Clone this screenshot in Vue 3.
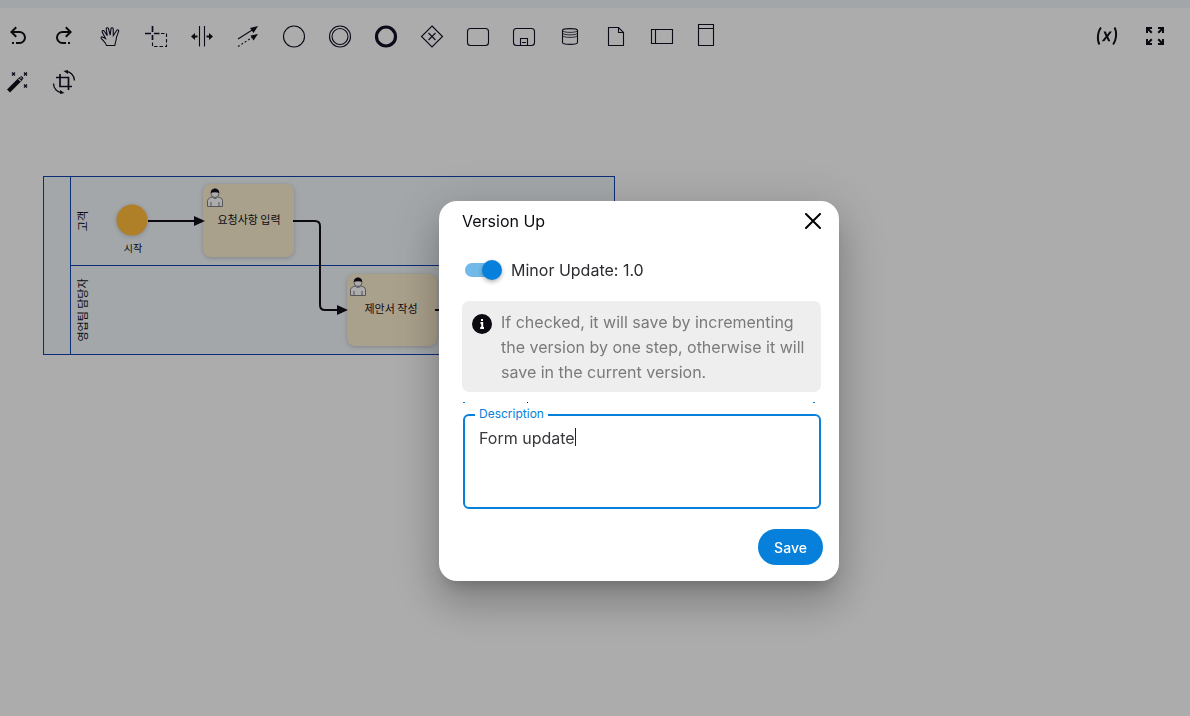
<script setup>
import { ref } from 'vue'

const minorUpdate = ref(true)
const description = ref('Form update')
</script>

<template>
  <div class="page">
    <div class="strip"></div>
    <header class="toolbar">
      <div class="tools">
        <div class="tool-row">
          <button class="tool" aria-label="Undo"><svg viewBox="0 0 24 24"><path class="solid" d="M13.5,7A6.5,6.5 0 0,1 20,13.5A6.5,6.5 0 0,1 13.5,20H10V18H13.5C16,18 18,16 18,13.5C18,11 16,9 13.5,9H7.83L10.91,12.09L9.5,13.5L4,8L9.5,2.5L10.92,3.91L7.83,7H13.5M6,18H8V20H6V18Z" /></svg></button>
          <button class="tool" aria-label="Redo"><svg viewBox="0 0 24 24"><path class="solid" d="M10.5,7A6.5,6.5 0 0,0 4,13.5A6.5,6.5 0 0,0 10.5,20H14V18H10.5C8,18 6,16 6,13.5C6,11 8,9 10.5,9H16.17L13.09,12.09L14.5,13.5L20,8L14.5,2.5L13.08,3.91L16.17,7H10.5M18,18H16V20H18V18Z" /></svg></button>
          <button class="tool" aria-label="Hand tool"><svg viewBox="0 0 24 24"><path d="M8.5 21.5C8 19 6 17.5 3.2 14.3C2.6 13.3 3.8 12.3 5 13.2L7.5 14.5L4.2 8C3.8 6.7 5.5 5.9 6.3 7.2L9.3 11.6L8.2 5C8.1 3.5 10.1 3.2 10.5 4.7L12.2 11L13 4.7C13.3 3.2 15.3 3.5 15.2 5L15.3 11.5L18.8 6.3C19.6 5.2 21.2 6.1 20.6 7.4L18.6 12.8C18.2 17 17.3 18 16.8 21.5Z" /></svg></button>
          <button class="tool" aria-label="Lasso tool"><svg viewBox="0 0 24 24"><path class="bold" d="M1 9.5H7M10 9.5H15.5M8.5 2V8M8.5 11V16" /><path class="lasso" d="M17 9.5H22.5V22.5H8.5V17" /></svg></button>
          <button class="tool" aria-label="Space tool"><svg viewBox="0 0 24 24"><path d="M9.5 2V22.5M14.5 2V22.5" /><path class="solid" d="M1 12.5L5 9V11.5H7.5V13.5H5V16ZM23 12.5L19 9V11.5H16.5V13.5H19V16Z" /></svg></button>
          <button class="tool" aria-label="Connect tool"><svg viewBox="0 0 24 24"><path d="M2 15L17 5.5" /><path class="dots" d="M2 22.5L17 13" /><path class="solid" d="M22 2L17.5 9L14 4ZM22 10L17.5 16.5L14.5 11.5Z" /></svg></button>
          <button class="tool" aria-label="Start event"><svg viewBox="0 0 24 24"><circle cx="12" cy="12.5" r="10.5" /></svg></button>
          <button class="tool" aria-label="Intermediate event"><svg viewBox="0 0 24 24"><circle cx="12" cy="12.5" r="10.5" /><circle cx="12" cy="12.5" r="8" /></svg></button>
          <button class="tool" aria-label="End event"><svg viewBox="0 0 24 24"><circle class="heavy" cx="12" cy="12.5" r="9.5" /></svg></button>
          <button class="tool" aria-label="Gateway"><svg viewBox="0 0 24 24"><path d="M12 2L22.5 12.5L12 23L1.5 12.5ZM8.5 9L15.5 16M15.5 9L8.5 16" /></svg></button>
          <button class="tool" aria-label="Task"><svg viewBox="0 0 24 24"><rect x="1.5" y="4.5" width="21" height="17" rx="3" /></svg></button>
          <button class="tool" aria-label="Subprocess"><svg viewBox="0 0 24 24"><rect x="1.5" y="4.5" width="21" height="17" rx="3" /><path d="M8.5 21.5V14.5H15.5V21.5M10 18.5H14" /></svg></button>
          <button class="tool" aria-label="Data store"><svg viewBox="0 0 24 24"><path d="M4.5 6.5C4.5 4 19.5 4 19.5 6.5V18.5C19.5 21 4.5 21 4.5 18.5Z" /><path class="fine" d="M4.5 6.5C4.5 9 19.5 9 19.5 6.5M4.5 9C4.5 11.5 19.5 11.5 19.5 9M4.5 11.5C4.5 14 19.5 14 19.5 11.5" /></svg></button>
          <button class="tool" aria-label="Data object"><svg viewBox="0 0 24 24"><path d="M4.5 3.5H14.5L19.5 8.5V21.5H4.5ZM14.5 3.5V8.5H19.5" /></svg></button>
          <button class="tool" aria-label="Horizontal pool"><svg viewBox="0 0 24 24"><path d="M1.5 5.5H22.5V19.5H1.5ZM5.5 5.5V19.5" /></svg></button>
          <button class="tool" aria-label="Vertical pool"><svg viewBox="0 0 24 24"><path d="M2.5 0.5H17.5V21.5H2.5ZM2.5 4.5H17.5" /></svg></button>
        </div>
        <div class="tool-row">
          <button class="tool" aria-label="Auto layout"><svg viewBox="0 0 24 24"><path class="solid" d="M1 19.5L12.5 8L15.5 6L17.5 8L15.5 11L4 22.5Z" /><path class="gap" d="M12.5 8.8L14.7 11M14.5 8.5L15.5 7.5" /><path class="spark" d="M6 2.5L9 5.5M9 2.5L6 5.5M18 2.5L21 5.5M21 2.5L18 5.5M18 14.5L21 17.5M21 14.5L18 17.5" /></svg></button>
          <button class="tool" aria-label="Change orientation"><svg viewBox="0 0 24 24"><path class="line" d="M8 4V16.5H20M4 7.5H16.5V20" /><path class="spark" d="M14 1.5C18.5 1.5 22 5 22.5 10.5M10 22.5C5.5 22.5 1.5 19 1.5 13.5" /><path class="solid" d="M11.5 1L16 0V4ZM12.5 23L8 20V24Z" /></svg></button>
        </div>
      </div>
      <div class="actions">
        <button class="tool" aria-label="Variables"><svg viewBox="0 0 24 24"><path class="solid" d="M20.41,3C21.8,5.71 22.35,8.84 22,12C21.8,15.16 20.7,18.29 18.83,21L17.3,20C18.91,17.57 19.85,14.8 20,12C20.34,9.2 19.89,6.43 18.7,4L20.41,3M5.17,3L6.7,4C5.09,6.43 4.15,9.2 4,12C3.66,14.8 4.12,17.57 5.3,20L3.61,21C2.21,18.29 1.65,15.17 2,12C2.2,8.84 3.3,5.71 5.17,3M12.08,10.68L14.4,7.45H16.93L13.15,12.45L15.35,17.37H13.09L11.71,14L9.28,17.33H6.76L10.66,12.21L8.53,7.45H10.8L12.08,10.68Z" /></svg></button>
        <button class="tool" aria-label="Full screen"><svg viewBox="0 0 24 24"><path class="solid" d="M3 3H9V5H6.5L9.5 8L8 9.5L5 6.5V9H3ZM21 3H15V5H17.5L14.5 8L16 9.5L19 6.5V9H21ZM3 21H9V19H6.5L9.5 16L8 14.5L5 17.5V15H3ZM21 21H15V19H17.5L14.5 16L16 14.5L19 17.5V15H21Z" /></svg></button>
      </div>
    </header>

    <main class="canvas">
      <svg class="diagram" viewBox="43 176 573 180" width="573" height="180" role="img" aria-label="Process diagram">
        <rect class="pool" x="43.5" y="176.5" width="571" height="178" />
        <path class="pool-line" d="M70.5 176.5V354.5M70.5 265.5H614.5" />
        <text class="label" transform="translate(87 221) rotate(-90)">고객</text>
        <text class="label" transform="translate(87 310) rotate(-90)">영업팀 담당자</text>
        <circle class="start" cx="132" cy="220" r="15.5" />
        <text class="label small" x="133" y="252">시작</text>
        <rect class="task" x="203" y="184" width="91" height="73" rx="8" />
        <rect class="task" x="347" y="274" width="90" height="72" rx="8" />
        <path class="flow" d="M148 221H196M293 221H315Q320 221 320 226V305Q320 310 325 310H339M435 310H450" />
        <path class="arrow" d="M205 221L194 216V226ZM348 310L337 305V315Z" />
        <g v-for="p in [[207, 188], [350, 277]]" :key="p[0]" :transform="`translate(${p[0]} ${p[1]})`">
          <path class="person" d="M0.5 18.5V12.5C1 10.5 3 9.5 5.5 9C7 11 9 11 10.5 9C13 9.5 15.5 10.5 15.5 12.5V18.5ZM4 18.5V14M12 18.5V14" />
          <circle class="person" cx="8" cy="5.5" r="4" />
          <path class="arrow" d="M3.8 5C3.5 -1 12.5 -1 12.2 5C10 4 6 4 3.8 5Z" />
        </g>
        <text class="label" x="249" y="224">요청사항 입력</text>
        <text class="label" x="391" y="313">제안서 작성</text>
      </svg>
    </main>

    <div class="overlay">
      <section class="dialog" role="dialog" aria-labelledby="dialog-title">
        <div class="dialog-head">
          <h2 id="dialog-title">Version Up</h2>
          <button class="close" aria-label="Close"><svg viewBox="0 0 16 16"><path d="M1 1L15 15M15 1L1 15" /></svg></button>
        </div>
        <label class="switch">
          <input v-model="minorUpdate" type="checkbox" role="switch" />
          <span>Minor Update: 1.0</span>
        </label>
        <div class="info">
          <svg viewBox="0 0 20 20"><circle cx="10" cy="10" r="10" /><path d="M10 5V7M8.5 9H10.2V14M8.2 14H12" /></svg>
          <p>If checked, it will save by incrementing the version by one step, otherwise it will save in the current version.</p>
        </div>
        <div class="marks"><i></i><i></i><i></i></div>
        <div class="field">
          <label for="description">Description</label>
          <textarea id="description" v-model="description" spellcheck="false"></textarea>
          <span class="caret"></span>
        </div>
        <div class="dialog-foot">
          <button class="save">Save</button>
        </div>
      </section>
    </div>
  </div>
</template>

<style>
body {
  background: #acacac;
}
</style>

<style scoped>
.page {
  min-height: 100vh;
  background: #acacac;
  font-family: Inter, "Noto Sans CJK KR", sans-serif;
  color: #0c0a10;
}
.strip {
  height: 8px;
  background: #a3a6a9;
}
button {
  border: 0;
  padding: 0;
  background: none;
  color: inherit;
  font-family: inherit;
}
.toolbar {
  display: flex;
  justify-content: space-between;
  align-items: flex-start;
  padding: 10px 17px 0 0;
}
.tools {
  display: flex;
  flex-direction: column;
  gap: 10px;
}
.tool-row {
  display: flex;
  gap: 10px;
}
.actions {
  display: flex;
  gap: 12px;
}
.tool {
  display: grid;
  place-items: center;
  width: 36px;
  height: 36px;
}
.tool svg {
  width: 24px;
  height: 24px;
  fill: none;
  stroke: #0c0a18;
  stroke-width: 1.1;
}
.tool .solid {
  fill: #0c0a10;
  stroke: none;
}
.tool .bold {
  stroke-width: 1.7;
}
.tool .spark {
  stroke-width: 1.3;
}
.tool .fine {
  stroke-width: 0.8;
}
.tool .line {
  stroke-width: 1.7;
}
.tool .heavy {
  stroke-width: 3.2;
}
.tool .gap {
  stroke: #acacac;
}
.tool .lasso {
  stroke-dasharray: 3.5 2;
}
.tool .dots {
  stroke-dasharray: 2 2;
}
.canvas {
  padding: 76px 0 0 43px;
}
.diagram {
  display: block;
}
.pool {
  fill: #a3a7aa;
  stroke: #0b2c78;
}
.pool-line {
  fill: none;
  stroke: #0b2c78;
}
.label {
  font-family: "Noto Sans CJK KR", sans-serif;
  font-size: 11px;
  text-anchor: middle;
  fill: #0c0a10;
}
.label.small {
  font-size: 10px;
}
.start {
  fill: #b08029;
  filter: drop-shadow(0 1px 2px rgba(0, 0, 0, 0.2));
}
.task {
  fill: #aaa18c;
  filter: drop-shadow(0 1px 2px rgba(0, 0, 0, 0.2));
}
.flow {
  fill: none;
  stroke: #0c0a10;
  stroke-width: 2;
}
.arrow {
  fill: #0c0a10;
}
.person {
  fill: #acacac;
  stroke: #55555a;
}
.overlay {
  position: fixed;
  inset: 0;
  display: grid;
  place-items: center;
  padding: 66px 0 0 88px;
}
.dialog {
  width: 400px;
  max-width: 100%;
  box-sizing: border-box;
  padding: 0 18px 16px 23px;
  border-radius: 18px;
  background: #fff;
  box-shadow: 0 11px 15px -7px rgba(0, 0, 0, 0.2), 0 24px 38px 3px rgba(0, 0, 0, 0.14), 0 9px 46px 8px rgba(0, 0, 0, 0.12);
}
.dialog-head {
  display: flex;
  align-items: center;
  justify-content: space-between;
  height: 39px;
}
h2 {
  margin: 0;
  font-size: 16px;
  font-weight: 400;
}
.close {
  display: grid;
  place-items: center;
  width: 16px;
  height: 16px;
}
.close svg {
  width: 16px;
  height: 16px;
  stroke: #000;
  stroke-width: 2;
  stroke-linecap: round;
}
.switch {
  display: flex;
  align-items: center;
  gap: 9px;
  height: 24px;
  margin: 18px 0 19px 3px;
  font-size: 16px;
  color: #2d2a30;
}
.switch input {
  appearance: none;
  display: flex;
  align-items: center;
  width: 30px;
  height: 14px;
  margin: 0 7px 0 0;
  background: #70b9e9;
  border-radius: 7px;
}
.switch input::before {
  content: "";
  flex: none;
  width: 20px;
  height: 20px;
  border-radius: 50%;
  background: #0780db;
  box-shadow: 0 2px 4px rgba(0, 0, 0, 0.3);
}
.switch input:checked::before {
  margin-left: 17px;
}
.info {
  display: flex;
  align-items: flex-start;
  gap: 9px;
  padding: 9px 8px 7px 10px;
  border-radius: 7px;
  background: #eee;
}
.info svg {
  flex: none;
  width: 20px;
  height: 20px;
  margin-top: 4px;
  fill: #0c0a10;
}
.info svg path {
  fill: none;
  stroke: #fff;
  stroke-width: 2;
}
.info p {
  margin: 0;
  font-size: 16px;
  line-height: 25px;
  color: #7a7a7a;
}
.marks {
  display: flex;
  justify-content: space-between;
  margin: 10px 6px 11px 1px;
}
.marks i {
  width: 2px;
  height: 1px;
  background: #0780db;
}
.marks i:nth-child(2) {
  width: 1px;
  margin-right: 224px;
  background: #000;
}
.field {
  position: relative;
  margin-left: 1px;
}
.field label {
  position: absolute;
  top: -8px;
  left: 12px;
  padding: 0 4px;
  background: #fff;
  font-size: 12px;
  line-height: 16px;
  color: #0780db;
}
.field textarea {
  display: block;
  box-sizing: border-box;
  width: 100%;
  height: 95px;
  padding: 10px 14px;
  border: 2px solid #0780db;
  border-radius: 6px;
  outline: none;
  resize: none;
  background: #fff;
  color: #3a373d;
  font-family: inherit;
  font-size: 16px;
  line-height: 24px;
}
.caret {
  position: absolute;
  top: 14px;
  left: 112px;
  width: 1px;
  height: 18px;
  background: #222;
}
.dialog-foot {
  display: flex;
  justify-content: flex-end;
  margin: 20px -2px 0 0;
}
.save {
  width: 65px;
  height: 36px;
  border-radius: 18px;
  background: #0780db;
  color: #fff;
  font-size: 14px;
  font-weight: 500;
}
</style>
